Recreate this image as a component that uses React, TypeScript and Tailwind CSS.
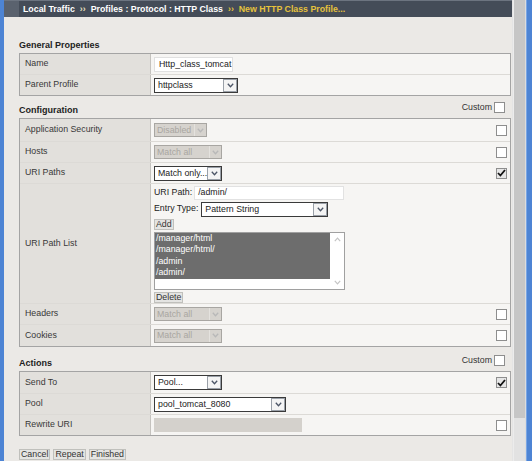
import React from "react";

const F = "font-['Liberation_Sans',Arial,sans-serif]";

function Chevron({ faded }: { faded?: boolean }) {
  return (
    <svg width="7" height="5" viewBox="0 0 7 5">
      <path d="M0.8 0.8 L3.5 3.8 L6.2 0.8" fill="none" stroke={faded ? "#b8b8b8" : "#4c5566"} strokeWidth="1.3" />
    </svg>
  );
}

function Select({ text, w, disabled }: { text: string; w: string; disabled?: boolean }) {
  if (disabled) {
    return (
      <div className={`${w} h-[14px] flex border border-[#a8a6a2] bg-[#d6d3ce]`}>
        <div className="flex-1 flex items-center pl-[2px] text-[#a9a6a1] leading-none whitespace-nowrap overflow-hidden">{text}</div>
        <div className="w-[12px] flex items-center justify-center border-l border-[#e4e2de]">
          <Chevron faded />
        </div>
      </div>
    );
  }
  return (
    <div className={`${w} h-[15px] flex border-[1.5px] border-[#3a3a3a] bg-white`}>
      <div className="flex-1 flex items-center pl-[3px] text-[#222] leading-none whitespace-nowrap overflow-hidden">{text}</div>
      <div className="w-[14px] flex items-center justify-center border border-[#9aa0a8] bg-[#f4f4f4]">
        <Chevron />
      </div>
    </div>
  );
}

function Check({ checked }: { checked?: boolean }) {
  return (
    <div className={`w-[11px] h-[11px] border border-[#8e8e8e] flex items-center justify-center ${checked ? "bg-[#e6e6e6]" : "bg-white"}`}>
      {checked && (
        <svg width="9" height="8" viewBox="0 0 9 8">
          <path d="M1 4 L3.4 6.5 L8 1" fill="none" stroke="#111" strokeWidth="1.8" />
        </svg>
      )}
    </div>
  );
}

function Btn({ children }: { children: React.ReactNode }) {
  return (
    <span className="inline-flex items-center h-[11px] px-[1px] bg-[#e4e4e2] border border-[#c0c0bc] text-[#333] leading-none">
      {children}
    </span>
  );
}

function Row({
  label,
  h,
  first,
  children,
  check,
}: {
  label: string;
  h: string;
  first?: boolean;
  children?: React.ReactNode;
  check?: "on" | "off";
}) {
  return (
    <div className={`flex ${h} ${first ? "" : "border-t border-[#dcdad6]"}`}>
      <div className="w-[131px] flex items-center pl-[5px] bg-[#e2e0dc] text-[#383838] border-r border-[#c4c2be]">
        {label}
      </div>
      <div className="flex-1 flex items-center pl-[3px] pr-[3px] bg-[#f6f5f3]">
        <div className="flex-1 flex items-center">{children}</div>
        {check && <Check checked={check === "on"} />}
      </div>
    </div>
  );
}

function Heading({ text, h, custom }: { text: string; h: string; custom?: boolean }) {
  return (
    <div className={`flex items-end ${h} pb-[3px] pr-[6px]`}>
      <div className="flex-1 font-bold text-[9px] text-[#222] leading-none">{text}</div>
      {custom && (
        <div className="flex items-center gap-[2px] text-[#333] leading-none mb-[2px]">
          <span>Custom</span>
          <Check />
        </div>
      )}
    </div>
  );
}

export default function App() {
  return (
    <div className={`${F} text-[8.8px] w-[532px] h-[461px] overflow-hidden flex bg-[#ebe9e6]`}>
      <div className="w-[4px] bg-[#4d84d4]" />
      <div className="w-[508px] flex flex-col">
        <div className="h-[17px] flex border-t border-[#6c7480]">
          <div className="w-[15px] bg-[#5a626e]" />
          <div className="flex-1 bg-[#444c58] flex items-center pl-[4px] font-bold text-[8.8px] text-white leading-none whitespace-pre">
            <span>Local Traffic</span>
            <span className="text-[#e8e0c0] mx-[5px]">››</span>
            <span>Profiles : Protocol : HTTP Class</span>
            <span className="text-[#e6c23c] ml-[5px]">››  New HTTP Class Profile...</span>
          </div>
        </div>
        <div className="pl-[15px] pr-[1px] flex flex-col">
          <Heading text="General Properties" h="h-[36px]" />
          <div className="border border-[#a4a4a4]">
            <Row label="Name" h="h-[20px]" first>
              <div className="w-[79px] h-[15px] bg-white border border-[#e0e0e0] flex items-center pl-[4px] text-[#222] leading-none">
                Http_class_tomcat
              </div>
            </Row>
            <Row label="Parent Profile" h="h-[21px]">
              <Select text="httpclass" w="w-[84px]" />
            </Row>
          </div>
          <Heading text="Configuration" h="h-[22px]" custom />
          <div className="border border-[#a4a4a4]">
            <Row label="Application Security" h="h-[22px]" first check="off">
              <Select text="Disabled" w="w-[53px]" disabled />
            </Row>
            <Row label="Hosts" h="h-[21px]" check="off">
              <Select text="Match all" w="w-[68px]" disabled />
            </Row>
            <Row label="URI Paths" h="h-[21px]" check="on">
              <Select text="Match only..." w="w-[68px]" />
            </Row>
            <Row label="URI Path List" h="h-[120px]">
              <div className="flex flex-col gap-[2px] pt-[1px]">
                <div className="flex items-center gap-[2px]">
                  <span className="text-[#222]">URI Path:</span>
                  <div className="w-[150px] h-[14px] bg-white border border-[#e2e2e2] flex items-center pl-[3px] text-[#222] leading-none">
                    /admin/
                  </div>
                </div>
                <div className="flex items-center gap-[3px]">
                  <span className="text-[#222]">Entry Type:</span>
                  <Select text="Pattern String" w="w-[127px]" />
                </div>
                <div className="flex">
                  <Btn>Add</Btn>
                </div>
                <div className="w-[191px] h-[58px] border border-[#a0a0a0] bg-white flex">
                  <div className="flex-1 flex flex-col">
                    {["/manager/html", "/manager/html/", "/admin", "/admin/"].map((t) => (
                      <div key={t} className="h-[11.5px] bg-[#6d6d6d] text-white flex items-center pl-[1px] leading-none">
                        {t}
                      </div>
                    ))}
                  </div>
                  <div className="w-[14px] flex flex-col justify-between items-center py-[4px]">
                    <svg width="7" height="5" viewBox="0 0 7 5">
                      <path d="M0.8 4.2 L3.5 1.2 L6.2 4.2" fill="none" stroke="#c4c4c4" strokeWidth="1.2" />
                    </svg>
                    <svg width="7" height="5" viewBox="0 0 7 5">
                      <path d="M0.8 0.8 L3.5 3.8 L6.2 0.8" fill="none" stroke="#c4c4c4" strokeWidth="1.2" />
                    </svg>
                  </div>
                </div>
                <div className="flex">
                  <Btn>Delete</Btn>
                </div>
              </div>
            </Row>
            <Row label="Headers" h="h-[21px]" check="off">
              <Select text="Match all" w="w-[68px]" disabled />
            </Row>
            <Row label="Cookies" h="h-[22px]" check="off">
              <Select text="Match all" w="w-[68px]" disabled />
            </Row>
          </div>
          <Heading text="Actions" h="h-[24px]" custom />
          <div className="border border-[#a4a4a4]">
            <Row label="Send To" h="h-[21px]" first check="on">
              <Select text="Pool..." w="w-[68px]" />
            </Row>
            <Row label="Pool" h="h-[21px]">
              <Select text="pool_tomcat_8080" w="w-[132px]" />
            </Row>
            <Row label="Rewrite URI" h="h-[21px]" check="off">
              <div className="w-[148px] h-[14px] bg-[#d4d1cc]" />
            </Row>
          </div>
          <div className="flex gap-[3px] mt-[13px]">
            <Btn>Cancel</Btn>
            <Btn>Repeat</Btn>
            <Btn>Finished</Btn>
          </div>
        </div>
      </div>
      <div className="w-[1px] bg-[#e4e4e4]" />
      <div className="w-[12px] flex flex-col bg-[#e2e2e2] border-l border-[#ececec]">
        <div className="h-[418px] bg-[#c6c6c6]" />
      </div>
      <div className="w-[1px] bg-[#dcdcdc]" />
      <div className="w-[6px] bg-[#4d84d4] border-l border-[#7aa6e4]" />
    </div>
  );
}
